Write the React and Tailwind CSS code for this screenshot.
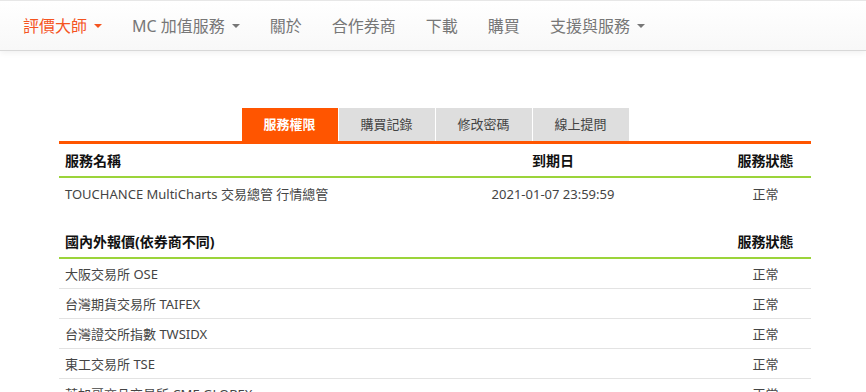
import React from 'react'

const navItems = [
  { label: '評價大師', caret: true, active: true },
  { label: 'MC 加值服務', caret: true },
  { label: '關於' },
  { label: '合作券商' },
  { label: '下載' },
  { label: '購買' },
  { label: '支援與服務', caret: true },
]

const tabs = ['服務權限', '購買記錄', '修改密碼', '線上提問']

const quotes = [
  '大阪交易所 OSE',
  '台灣期貨交易所 TAIFEX',
  '台灣證交所指數 TWSIDX',
  '東工交易所 TSE',
  '芝加哥商品交易所 CME GLOBEX',
]

const Caret = () => (
  <span className="ml-[7px] inline-block w-0 h-0 border-l-[4px] border-r-[4px] border-t-[4px] border-l-transparent border-r-transparent border-t-current align-middle" />
)

const HeaderRow = ({ name, date }) => (
  <div className="flex items-center h-[34px] border-b-[2px] border-[#9bd43a] text-[14px] font-bold text-[#111]">
    <div className="flex-1 pl-[6px]">{name}</div>
    <div className="w-[226px] text-center mr-[54px]">{date}</div>
    <div className="w-[91px] text-center">服務狀態</div>
  </div>
)

const Row = ({ name, date, border }) => (
  <div className={`flex items-center h-[30px] pt-[3px] text-[13px] text-[#444] ${border ? 'border-b border-[#e3e3e3]' : ''}`}>
    <div className="flex-1 pl-[6px] whitespace-nowrap">{name}</div>
    <div className="w-[226px] text-center mr-[54px]">{date}</div>
    <div className="w-[91px] text-center">正常</div>
  </div>
)

export default function App() {
  return (
    <div className="min-h-[392px] bg-white overflow-hidden" style={{ fontFamily: '"Noto Sans", "Noto Sans CJK TC", sans-serif' }}>
      <nav className="h-[51px] border-t border-[#e7e7e7] border-b border-b-[#d8d8d8] bg-gradient-to-b from-white to-[#f8f8f8] shadow-[0_2px_6px_rgba(0,0,0,0.06)] flex items-center pl-[8px]">
        {navItems.map((item) => (
          <a
            key={item.label}
            className={`px-[15px] text-[16px] flex items-center ${item.active ? 'text-[#f5541f]' : 'text-[#777]'}`}
          >
            {item.label}
            {item.caret && <Caret />}
          </a>
        ))}
      </nav>

      <div className="w-[752px] ml-[59px] mt-[57px]">
        <div className="flex justify-center gap-[1px] border-b-[3px] border-[#ff5500]">
          {tabs.map((t, i) => (
            <div
              key={t}
              className={`w-[96px] h-[33px] flex items-center justify-center text-[13px] ${
                i === 0 ? 'bg-[#ff5500] text-white font-bold' : 'bg-[#dedede] text-[#444]'
              }`}
            >
              {t}
            </div>
          ))}
        </div>

        <HeaderRow name="服務名稱" date="到期日" />
        <Row name="TOUCHANCE MultiCharts 交易總管 行情總管" date="2021-01-07 23:59:59" />

        <div className="mt-[17px]">
          <HeaderRow name="國內外報價(依券商不同)" date="" />
          {quotes.map((q) => (
            <Row key={q} name={q} date="" border />
          ))}
        </div>
      </div>
    </div>
  )
}
